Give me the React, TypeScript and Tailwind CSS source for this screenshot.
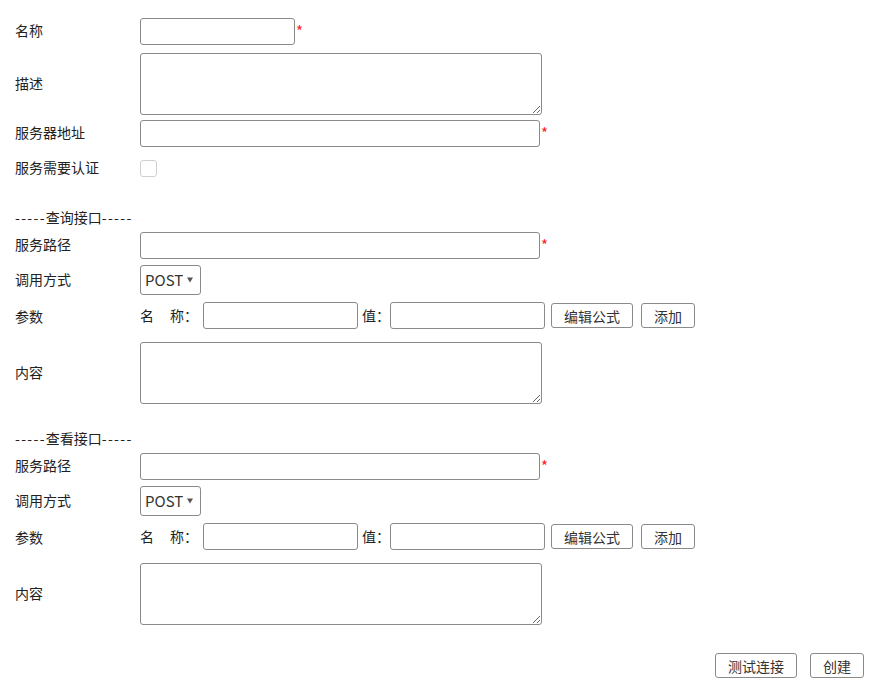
import React from "react"

const font = { fontFamily: '"Noto Sans CJK SC", "Noto Sans", sans-serif' }

function Star() {
  return <span className="self-start mt-[5px] ml-[1px] text-[15px] leading-none text-[#ff2020]">*</span>
}

function Label({ children, pt = "" }: { children: React.ReactNode; pt?: string }) {
  return <div className={`w-[125px] shrink-0 text-[14px] text-[#222] pb-[2px] ${pt}`}>{children}</div>
}

function TextInput({ w }: { w: string }) {
  return (
    <input
      type="text"
      className={`${w} h-[27px] rounded-[3px] border border-[#8a8a8a] bg-white px-1 text-[14px] outline-none`}
    />
  )
}

function Area() {
  return (
    <textarea className="w-[402px] h-[62px] rounded-[3px] border border-[#8a8a8a] bg-white px-1 text-[14px] outline-none block" />
  )
}

function Btn({ children, w }: { children: React.ReactNode; w: string }) {
  return (
    <button className={`${w} h-[25px] rounded-[3px] border border-[#8a8a8a] bg-white text-[14px] leading-none text-[#333]`}>
      {children}
    </button>
  )
}

function MethodSelect() {
  return (
    <div className="relative w-[61px] h-[30px]">
      <select className="appearance-none w-full h-full rounded-[3px] border border-[#8a8a8a] bg-white pl-[4px] text-[15px] text-[#333] outline-none">
        <option>POST</option>
        <option>GET</option>
      </select>
      <svg className="pointer-events-none absolute left-[47px] top-[12px]" width="6" height="6" viewBox="0 0 6 6">
        <path d="M0 0.5h6L3 5.5z" fill="#555" />
      </svg>
    </div>
  )
}

function Section({ title }: { title: string }) {
  return (
    <>
      <div className="h-[18px] flex items-center text-[14px] text-[#222]">
        <span className="tracking-[1.3px]">-----</span>
        <span>{title}</span>
        <span className="tracking-[1.3px]">-----</span>
      </div>
      <div className="mt-[6px] flex items-center h-[27px]">
        <Label>服务路径</Label>
        <TextInput w="w-[400px]" />
        <Star />
      </div>
      <div className="mt-[6px] flex items-center h-[30px]">
        <Label>调用方式</Label>
        <MethodSelect />
      </div>
      <div className="mt-[7px] flex items-center h-[27px]">
        <Label pt="pt-[4px]">参数</Label>
        <div className="flex items-center text-[14px] text-[#222]">
          <span className="w-[63px] flex">
            <span>名</span>
            <span className="ml-[16px]">称：</span>
          </span>
          <TextInput w="w-[155px]" />
          <span className="w-[32px] pl-[4px]">值：</span>
          <TextInput w="w-[155px]" />
          <div className="ml-[6px] flex gap-[8px]">
            <Btn w="w-[82px]">编辑公式</Btn>
            <Btn w="w-[54px]">添加</Btn>
          </div>
        </div>
      </div>
      <div className="mt-[13px] flex items-center h-[62px]">
        <Label>内容</Label>
        <Area />
      </div>
    </>
  )
}

export default function App() {
  return (
    <div className="w-[875px] h-[685px] bg-white pl-[15px] pt-[18px] overflow-hidden" style={font}>
      <div className="flex items-center h-[27px]">
        <Label>名称</Label>
        <TextInput w="w-[155px]" />
        <Star />
      </div>
      <div className="mt-[8px] flex items-center h-[62px]">
        <Label>描述</Label>
        <Area />
      </div>
      <div className="mt-[5px] flex items-center h-[27px]">
        <Label>服务器地址</Label>
        <TextInput w="w-[400px]" />
        <Star />
      </div>
      <div className="mt-[7px] flex items-center h-[28px]">
        <Label>服务需要认证</Label>
        <input type="checkbox" className="appearance-none w-[17px] h-[17px] rounded-[3px] border border-[#d0d0d0] bg-white" />
      </div>
      <div className="mt-[26px]">
        <Section title="查询接口" />
      </div>
      <div className="mt-[25px]">
        <Section title="查看接口" />
      </div>
      <div className="mt-[28px] flex justify-end gap-[13px] pr-[11px]">
        <Btn w="w-[82px]">测试连接</Btn>
        <Btn w="w-[54px]">创建</Btn>
      </div>
    </div>
  )
}
